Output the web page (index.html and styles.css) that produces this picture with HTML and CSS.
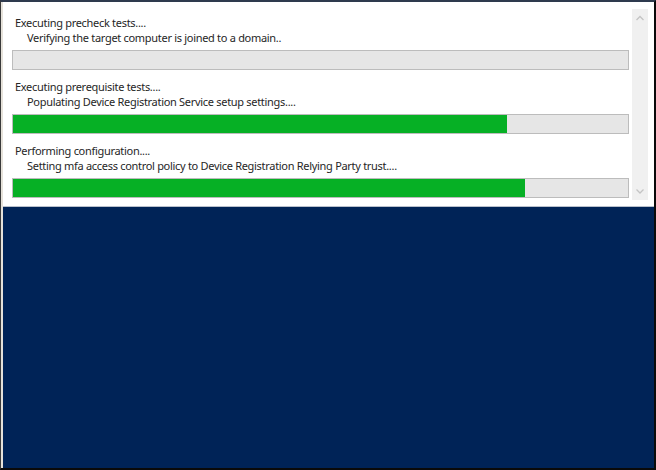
FILE: index.html
```html
<!DOCTYPE html>
<html lang="en">
<head>
    <meta charset="UTF-8">
    <title>Device Registration Configuration</title>
    <link rel="stylesheet" href="styles.css">
</head>
<body>
    <div class="okno">
        <div class="panel">
            <div class="kroki">
                <div class="krok">
                    <div class="tytul">Executing precheck tests....</div>
                    <div class="opis">Verifying the target computer is joined to a domain..</div>
                    <div class="pasek"><div class="wypelnienie" style="width: 0%;"></div></div>
                </div>
                <div class="krok">
                    <div class="tytul">Executing prerequisite tests....</div>
                    <div class="opis">Populating Device Registration Service setup settings....</div>
                    <div class="pasek"><div class="wypelnienie" style="width: 80.3%;"></div></div>
                </div>
                <div class="krok">
                    <div class="tytul">Performing configuration....</div>
                    <div class="opis">Setting mfa access control policy to Device Registration Relying Party trust....</div>
                    <div class="pasek"><div class="wypelnienie" style="width: 83.2%;"></div></div>
                </div>
            </div>
            <div class="scroll">
                <svg width="16" height="16" viewBox="0 0 16 16"><path d="M4.5 10 L8 6.5 L11.5 10" fill="none" stroke="#c4c4c4" stroke-width="1.3"/></svg>
                <svg width="16" height="16" viewBox="0 0 16 16"><path d="M4.5 6.5 L8 10 L11.5 6.5" fill="none" stroke="#c4c4c4" stroke-width="1.3"/></svg>
            </div>
        </div>
        <div class="tlo"></div>
    </div>
</body>
</html>
```

FILE: styles.css
```css
body {
    margin: 0;
    background: #000;
    font-family: "Noto Sans", "Open Sans", sans-serif;
}
.okno {
    width: 656px;
    height: 470px;
    box-sizing: border-box;
    border-left: 1px solid #3a3a3a;
    border-top: 2px solid #2e3a4e;
    border-right: 2px solid #0a0a0a;
    border-bottom: 2px solid #0a0a0a;
    padding-left: 2px;
    background: #e6e2da;
    display: flex;
    flex-direction: column;
}
.panel {
    background: #fff;
    height: 205px;
    box-sizing: border-box;
    padding: 7px 6px 6px 9px;
    display: flex;
    border-bottom: 1px solid #b9c0cc;
}
.kroki {
    flex: 1;
}
.krok {
    padding-top: 7px;
    height: 64px;
    box-sizing: border-box;
}
.tytul, .opis {
    font-size: 11px;
    line-height: 14.5px;
    letter-spacing: -0.3px;
    color: #262626;
    padding-left: 3px;
    white-space: nowrap;
}
.opis {
    padding-left: 15px;
}
.pasek {
    margin-top: 5px;
    height: 20px;
    box-sizing: border-box;
    border: 1px solid #bcbcbc;
    background: #e6e6e6;
}
.wypelnienie {
    height: 100%;
    background: #06b025;
}
.scroll {
    width: 16px;
    margin-left: 3px;
    background: #f0f0f0;
    display: flex;
    flex-direction: column;
    justify-content: space-between;
    padding: 1px 0;
}
.tlo {
    flex: 1;
    background: #002357;
}
```
